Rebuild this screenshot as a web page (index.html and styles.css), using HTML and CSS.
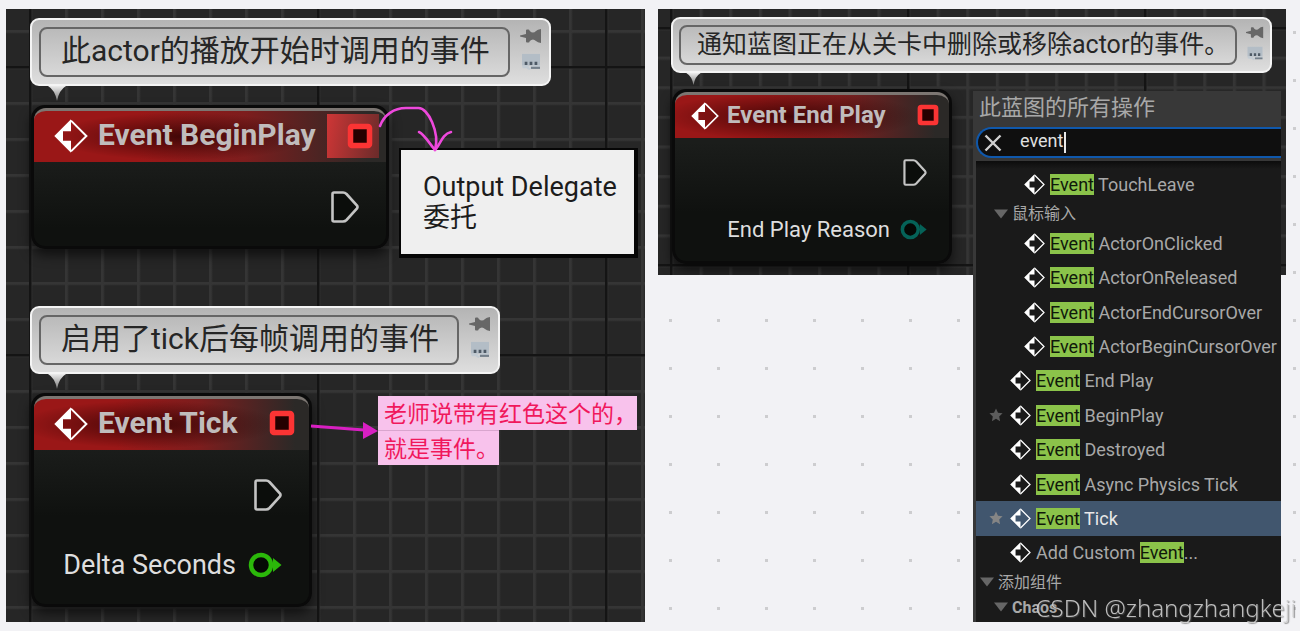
FILE: index.html
```html
<!DOCTYPE html>
<html lang="zh-CN">
<head>
<meta charset="UTF-8">
<meta name="viewport" content="width=device-width, initial-scale=1.0">
<title>Blueprint Events</title>
<link rel="stylesheet" href="styles.css">
</head>
<body>
<svg class="defs" aria-hidden="true">
  <defs>
    <symbol id="icon-event" viewBox="0 0 34 34">
      <path d="M17 0.3 L0.3 17 L17 33.7 V21.8 H9 V12.2 H17 Z" fill="#fff"/>
      <path d="M17 1.6 L32.4 17 L17 32.4" fill="none" stroke="#fff" stroke-width="2"/>
    </symbol>
    <symbol id="icon-exec" viewBox="0 0 28 32">
      <path d="M3 1.5 H12 Q14 1.5 15.5 3 L26 14.5 Q27 16 26 17.5 L15.5 29 Q14 30.5 12 30.5 H3 Q1.5 30.5 1.5 29 V3 Q1.5 1.5 3 1.5 Z" fill="#0b0d0b" stroke="#c4c4c4" stroke-width="2.6"/>
    </symbol>
    <symbol id="icon-data" viewBox="0 0 34 26">
      <path d="M25 6 L33.5 13 L25 20 Z" fill="currentColor"/>
      <circle cx="13" cy="13" r="10" fill="#050805" stroke="currentColor" stroke-width="4.5"/>
    </symbol>
    <symbol id="icon-delegate" viewBox="0 0 26 26">
      <rect x="3.5" y="3.5" width="19" height="19" rx="1.5" fill="#240000" stroke="#fb3434" stroke-width="5.5"/>
    </symbol>
    <symbol id="icon-pin" viewBox="0 0 22 16">
      <path d="M0 7.4 L6 6 V2.5 Q6 1.5 7 1.5 H8.5 Q9.5 1.5 9.8 3 Q13 6 16 3 Q17.5 1.5 21 1 V15 Q17.5 14.5 16 13 Q13 10 9.8 13 Q9.5 14.5 8.5 14.5 H7 Q6 14.5 6 13.5 V10 L0 8.6 Z" fill="#676767"/>
    </symbol>
    <symbol id="icon-comment" viewBox="0 0 22 20">
      <path d="M1 1 H21 V14 H1 Z" fill="#b3bdc6"/>
      <path d="M1 14 H8 L9.5 17 L12 14 H21 V17 H12 L9 19 L6 17 H3 Q1 17 1 14 Z" fill="#c2cbd3"/>
      <path d="M11 16.5 H21" stroke="#75808b" stroke-width="2.4"/>
      <path d="M4 11.5 H7 M9.5 11.5 H12.5 M15 11.5 H18" stroke="#4e5a66" stroke-width="3.4"/>
    </symbol>
    <symbol id="icon-tail" viewBox="0 0 18 15">
      <path d="M0 0 H18 Q11 4 9 15 Q7 4 0 0 Z" fill="url(#tail-fade)"/>
    </symbol>
    <symbol id="icon-star" viewBox="0 0 14 14">
      <path d="M7 0.5 L9 4.8 L13.6 5.3 L10.2 8.5 L11.1 13.2 L7 10.8 L2.9 13.2 L3.8 8.5 L0.4 5.3 L5 4.8 Z" fill="currentColor"/>
    </symbol>
    <symbol id="icon-fold" viewBox="0 0 14 10">
      <path d="M0 0.5 H14 L7 9.5 Z" fill="#666"/>
    </symbol>
    <linearGradient id="tail-fade" x1="0" y1="0" x2="0" y2="1">
      <stop offset="0" stop-color="#ececec"/>
      <stop offset="1" stop-color="#777"/>
    </linearGradient>
  </defs>
</svg>

<main class="board">
  <section class="panel">
    <div class="graph graph-tall">
      <div class="bubble bubble-begin">
        <input class="bubble-text" type="text" aria-label="Event BeginPlay comment" value="此actor的播放开始时调用的事件">
        <div class="bubble-tools">
          <button type="button" aria-label="Pin comment"><svg><use href="#icon-pin"/></svg></button>
          <button type="button" aria-label="Toggle comment"><svg><use href="#icon-comment"/></svg></button>
        </div>
        <svg class="bubble-tail"><use href="#icon-tail"/></svg>
      </div>
      <article class="node node-begin">
        <header class="node-head">
          <svg class="node-icon"><use href="#icon-event"/></svg>
          <h2>Event BeginPlay</h2>
          <span class="delegate delegate-hover"><svg><use href="#icon-delegate"/></svg></span>
        </header>
        <div class="node-body">
          <div class="row"><svg class="exec"><use href="#icon-exec"/></svg></div>
        </div>
      </article>
      <div class="tooltip" role="tooltip">Output Delegate<br>委托</div>

      <div class="bubble bubble-tick">
        <input class="bubble-text" type="text" aria-label="Event Tick comment" value="启用了tick后每帧调用的事件">
        <div class="bubble-tools">
          <button type="button" aria-label="Pin comment"><svg><use href="#icon-pin"/></svg></button>
          <button type="button" aria-label="Toggle comment"><svg><use href="#icon-comment"/></svg></button>
        </div>
        <svg class="bubble-tail"><use href="#icon-tail"/></svg>
      </div>
      <article class="node node-tick">
        <header class="node-head">
          <svg class="node-icon"><use href="#icon-event"/></svg>
          <h2>Event Tick</h2>
          <span class="delegate"><svg><use href="#icon-delegate"/></svg></span>
        </header>
        <div class="node-body">
          <div class="row"><svg class="exec"><use href="#icon-exec"/></svg></div>
          <div class="row">Delta Seconds <svg class="data data-float"><use href="#icon-data"/></svg></div>
        </div>
      </article>
      <p class="note"><span>老师说带有红色这个的，</span><span>就是事件。</span></p>

      <svg class="arrows" viewBox="0 0 640 613" aria-hidden="true">
        <g fill="none" stroke="#ee48dc" stroke-width="2.6" stroke-linecap="round" stroke-linejoin="round">
          <path d="M374 117 C378 106 388 99 400 99 L412 99 C422 98 434 124 429 141"/>
          <path d="M413 123 C418 125 423 134 429 141 C434 136 436 125 445 123"/>
        </g>
        <path d="M305 417 L358 421" stroke="#d81fc2" stroke-width="3"/>
        <path d="M357 413 V430 L372 422 Z" fill="#d81fc2"/>
      </svg>
    </div>
  </section>

  <section class="panel">
    <div class="graph graph-small">
      <div class="bubble bubble-end">
        <input class="bubble-text" type="text" aria-label="Event End Play comment" value="通知蓝图正在从关卡中删除或移除actor的事件。">
        <div class="bubble-tools">
          <button type="button" aria-label="Pin comment"><svg><use href="#icon-pin"/></svg></button>
          <button type="button" aria-label="Toggle comment"><svg><use href="#icon-comment"/></svg></button>
        </div>
        <svg class="bubble-tail"><use href="#icon-tail"/></svg>
      </div>
      <article class="node node-end">
        <header class="node-head">
          <svg class="node-icon"><use href="#icon-event"/></svg>
          <h2>Event End Play</h2>
          <span class="delegate"><svg><use href="#icon-delegate"/></svg></span>
        </header>
        <div class="node-body">
          <div class="row"><svg class="exec"><use href="#icon-exec"/></svg></div>
          <div class="row">End Play Reason <svg class="data data-enum"><use href="#icon-data"/></svg></div>
        </div>
      </article>
    </div>

    <div class="menu">
      <h3>此蓝图的所有操作</h3>
      <div class="search">
        <button type="button" aria-label="Clear search">
          <svg viewBox="0 0 18 18"><path d="M1.5 1.5 L16.5 16.5 M16.5 1.5 L1.5 16.5" stroke="#d0d0d0" stroke-width="2.4"/></svg>
        </button>
        <input type="text" aria-label="Search actions" value="event">
        <span class="caret"></span>
      </div>
      <ul class="actions">
        <li class="action deep"><svg><use href="#icon-event"/></svg><span><mark>Event</mark> TouchLeave</span></li>
        <li class="group inner"><svg><use href="#icon-fold"/></svg>鼠标输入</li>
        <li class="action deep"><svg><use href="#icon-event"/></svg><span><mark>Event</mark> ActorOnClicked</span></li>
        <li class="action deep"><svg><use href="#icon-event"/></svg><span><mark>Event</mark> ActorOnReleased</span></li>
        <li class="action deep"><svg><use href="#icon-event"/></svg><span><mark>Event</mark> ActorEndCursorOver</span></li>
        <li class="action deep"><svg><use href="#icon-event"/></svg><span><mark>Event</mark> ActorBeginCursorOver</span></li>
        <li class="action"><svg><use href="#icon-event"/></svg><span><mark>Event</mark> End Play</span></li>
        <li class="action starred"><svg class="star"><use href="#icon-star"/></svg><svg><use href="#icon-event"/></svg><span><mark>Event</mark> BeginPlay</span></li>
        <li class="action"><svg><use href="#icon-event"/></svg><span><mark>Event</mark> Destroyed</span></li>
        <li class="action"><svg><use href="#icon-event"/></svg><span><mark>Event</mark> Async Physics Tick</span></li>
        <li class="action starred selected"><svg class="star"><use href="#icon-star"/></svg><svg><use href="#icon-event"/></svg><span><mark>Event</mark> Tick</span></li>
        <li class="action"><svg><use href="#icon-event"/></svg><span>Add Custom <mark>Event</mark>...</span></li>
        <li class="group"><svg><use href="#icon-fold"/></svg>添加组件</li>
        <li class="group inner bold"><svg><use href="#icon-fold"/></svg>Chaos</li>
      </ul>
    </div>
  </section>
</main>
<div class="watermark">CSDN @zhangzhangkeji</div>
</body>
</html>
```

FILE: styles.css
```css
* {
  box-sizing: border-box;
}
body {
  margin: 0;
  font-family: Roboto, "Noto Sans CJK SC", sans-serif;
  background: conic-gradient(at 3px 3px, #f2f2f5 75%, #cdcdcf 0) 45px 31px / 48px 48px;
}
button {
  display: flex;
  padding: 0;
  border: 0;
  background: none;
}
.defs {
  position: absolute;
  width: 0;
  height: 0;
}
.board {
  display: grid;
  grid-template-columns: 639fr 628fr;
  gap: 13px;
  min-height: 100vh;
  padding: 9px 14px 9px 6px;
}
.panel {
  position: relative;
}

/* graph canvas, eight cells to each dark line */
.graph {
  --major: 288px;
  --minor: calc(var(--major) / 8);
  --x: 23px;
  --y: 57px;
  position: relative;
  overflow: hidden;
  background:
    linear-gradient(90deg, #141414 2px, transparent 3px) var(--x) 0 / var(--major) 100%,
    linear-gradient(#141414 2px, transparent 3px) 0 var(--y) / 100% var(--major),
    linear-gradient(90deg, #353535 2px, transparent 4px) var(--x) 0 / var(--minor) 100%,
    linear-gradient(#353535 2px, transparent 4px) 0 var(--y) / 100% var(--minor),
    #262626;
}
.graph-tall {
  height: 100%;
  min-height: 613px;
}
.graph-small {
  --major: 237px;
  --x: 12px;
  --y: 18px;
  height: 266px;
}

/* comment bubbles */
.bubble {
  position: absolute;
  display: flex;
  gap: 10px;
  height: 68px;
  padding: 7px;
  border: 2px solid #f4f4f4;
  border-radius: 9px;
  background: linear-gradient(#b4b4b4, #dedede);
}
.bubble-begin {
  left: 24px;
  top: 9px;
  width: 521px;
}
.bubble-tick {
  left: 24px;
  top: 297px;
  width: 470px;
}
.bubble-text {
  flex: 1;
  min-width: 0;
  padding: 0 0 8px 20px;
  border: 2px solid #666;
  border-radius: 8px;
  background: none;
  color: #262626;
  font: inherit;
  font-size: 30px;
}
.bubble-tools {
  display: flex;
  flex-direction: column;
  gap: 8px;
}
.bubble-tools svg {
  width: 22px;
  height: 18px;
}
.bubble-tail {
  position: absolute;
  left: 16px;
  top: 66px;
  width: 18px;
  height: 15px;
}

/* nodes */
.node {
  position: absolute;
  border: 3px solid #0a0a0a;
  border-radius: 14px;
  background: linear-gradient(#1b1d1b 50px, #0f110f 120px);
  box-shadow: 0 6px 12px rgba(0, 0, 0, 0.6);
  color: #dedede;
  font-size: 27px;
}
.node-begin {
  left: 25px;
  top: 96px;
  width: 358px;
}
.node-tick {
  left: 25px;
  top: 384px;
  width: 281px;
}
.node-head {
  display: flex;
  align-items: center;
  height: 54px;
  padding: 0 14px 2px 20px;
  border-top: 3px solid #7c7672;
  border-radius: 12px 12px 0 0;
  background:
    radial-gradient(ellipse 130px 24px at 42% 50%, rgba(40, 0, 0, 0.75), rgba(40, 0, 0, 0)),
    linear-gradient(90deg, #9a1717 30%, #7d1d1d 60%, #2b2927 95%);
}
.node-icon {
  width: 34px;
  height: 34px;
}
.node-head h2 {
  flex: 1;
  margin: 0 0 0 10px;
  padding-bottom: 2px;
  color: #c0bcbc;
  font-size: 30px;
  line-height: 36px;
  white-space: nowrap;
}
.delegate {
  display: flex;
  align-items: center;
  padding-bottom: 2px;
}
.delegate svg {
  width: 26px;
  height: 26px;
}
.delegate-hover {
  height: 44px;
  margin-right: -7px;
  padding: 0 6px 0 20px;
  background: linear-gradient(100deg, #cf3636, #6a2b2a);
}
.node-body {
  padding: 10px 27px 4px;
}
.row {
  display: flex;
  align-items: center;
  justify-content: flex-end;
  gap: 12px;
  height: 70px;
  white-space: nowrap;
}
.exec {
  width: 28px;
  height: 32px;
}
.data {
  width: 34px;
  height: 26px;
}
.data-float {
  color: #2bb80a;
}
.data-enum {
  color: #056258;
}

/* the second graph is zoomed out */
.graph-small .bubble {
  left: 13px;
  top: 8px;
  width: 601px;
  height: 56px;
  padding: 6px;
  gap: 9px;
}
.graph-small .bubble-text {
  padding-bottom: 6px;
  padding-left: 16px;
  font-size: 25px;
}
.graph-small .bubble-tools {
  gap: 6px;
}
.graph-small .bubble-tools svg {
  width: 18px;
  height: 15px;
}
.graph-small .bubble-tail {
  left: 13px;
  top: 54px;
  width: 15px;
  height: 12px;
}
.graph-small .node {
  left: 14px;
  top: 80px;
  width: 280px;
  font-size: 22px;
}
.graph-small .node-head {
  height: 46px;
  padding: 0 10px 2px 16px;
}
.graph-small .node-icon {
  width: 28px;
  height: 28px;
}
.graph-small h2 {
  margin-left: 8px;
  font-size: 24px;
}
.graph-small .delegate svg {
  width: 22px;
  height: 22px;
}
.graph-small .node-body {
  padding: 6px 22px 3px;
}
.graph-small .row {
  gap: 10px;
  height: 57px;
}
.graph-small .exec {
  width: 24px;
  height: 27px;
}
.graph-small .data {
  width: 27px;
  height: 21px;
}

.tooltip {
  position: absolute;
  left: 393px;
  top: 139px;
  width: 239px;
  padding: 22px 18px 20px 22px;
  border: solid #060606;
  border-width: 2px 4px 4px 2px;
  background: #efefef;
  color: #1c1c1c;
  font-size: 27px;
  line-height: 31px;
  white-space: nowrap;
}
.note {
  position: absolute;
  left: 372px;
  top: 387px;
  display: flex;
  flex-direction: column;
  align-items: flex-start;
  margin: 0;
  color: #f0185c;
  font-family: "Noto Sans CJK SC", sans-serif;
  font-size: 23px;
  line-height: 32px;
}
.note span {
  padding: 0 0 2px 6px;
  background: #f8c2ec;
}
.note span + span {
  border-top: 1px solid #d9a5ce;
}
.arrows {
  position: absolute;
  left: 0;
  top: 0;
  width: 640px;
  height: 613px;
  pointer-events: none;
}

/* action menu */
.menu {
  position: absolute;
  top: 82px;
  right: 5px;
  bottom: 0;
  display: flex;
  flex-direction: column;
  width: 308px;
  padding-left: 3px;
  background: #383838;
  color: #a8a8a8;
}
.menu h3 {
  margin: 0;
  padding: 1px 0 3px 3px;
  font-size: 22px;
  font-weight: normal;
  line-height: 32px;
}
.search {
  display: flex;
  align-items: center;
  height: 31px;
  margin-bottom: 3px;
  padding-left: 6px;
  border: 2px solid #0f58ac;
  border-right: 0;
  border-radius: 16px 0 0 16px;
  background: #0f0f0f;
}
.search button svg {
  width: 18px;
  height: 18px;
}
.search input {
  width: 44px;
  height: 24px;
  margin-left: 18px;
  padding: 0 0 4px;
  border: 0;
  background: none;
  color: #e0e0e0;
  font: inherit;
  font-size: 18px;
}
.caret {
  width: 2px;
  height: 21px;
  background: #e8e8e8;
}
.actions {
  flex: 1;
  display: flex;
  flex-direction: column;
  margin: 0;
  padding: 6px 0 2px;
  list-style: none;
  background: linear-gradient(#0c0c0c, #1a1a1a 8px);
  font-size: 18px;
  line-height: 21px;
  white-space: nowrap;
}
.action {
  flex: 1;
  display: flex;
  align-items: center;
  gap: 5px;
  padding-left: 34px;
}
.action svg {
  flex: none;
  width: 21px;
  height: 21px;
}
.action .star {
  width: 14px;
  height: 14px;
  color: #5c5c5c;
}
.deep {
  padding-left: 48px;
}
.starred {
  padding-left: 13px;
}
.starred .star {
  margin-right: 2px;
}
.selected {
  background: #41566e;
  color: #e8e8e8;
}
.selected .star {
  color: #858585;
}
mark {
  display: inline-block;
  background: #8bc34a;
  color: #10180a;
}
.group {
  display: flex;
  align-items: center;
  gap: 4px;
  height: 25px;
  padding-left: 4px;
  font-size: 16px;
}
.group svg {
  width: 14px;
  height: 10px;
}
.inner {
  padding-left: 18px;
}
.bold {
  font-weight: bold;
}

.watermark {
  position: fixed;
  right: 4px;
  bottom: 7px;
  color: rgba(205, 205, 205, 0.9);
  font-family: "Noto Sans", sans-serif;
  font-size: 24px;
  font-weight: 300;
  line-height: 32px;
  text-shadow: 1px 1px 1px rgba(90, 90, 90, 0.6);
}
```
